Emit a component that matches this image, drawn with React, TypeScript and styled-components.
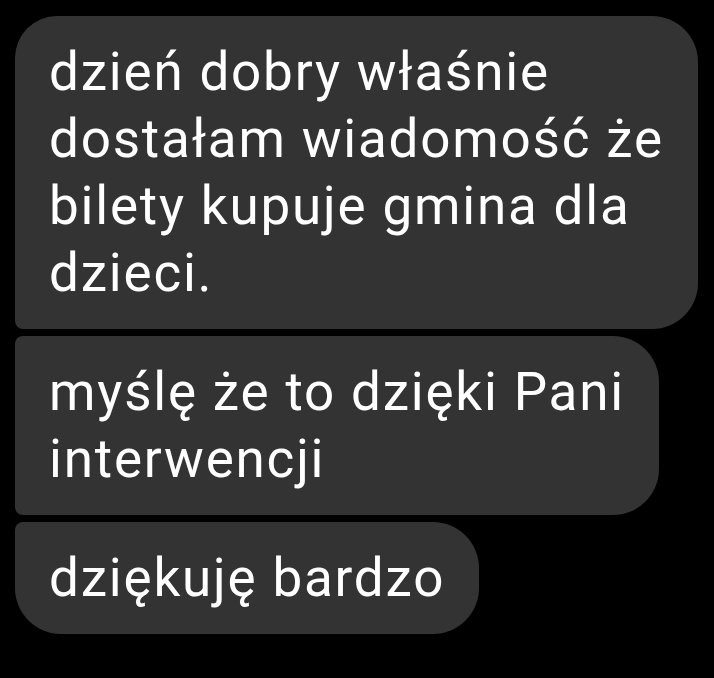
import React from "react";
import styled, { createGlobalStyle } from "styled-components";

const Global = createGlobalStyle`
  html, body { margin: 0; padding: 0; background: #000; }
  body { width: 714px; height: 678px; overflow: hidden; }
`;

const Thread = styled.div`
  display: flex;
  flex-direction: column;
  align-items: flex-start;
  gap: 7px;
  padding: 16px 0 0 15px;
  font-family: Roboto, "Noto Sans", sans-serif;
`;

type Pos = "first" | "middle" | "last";

const radii: Record<Pos, string> = {
  first: "42px 46px 46px 8px",
  middle: "8px 46px 46px 8px",
  last: "8px 46px 46px 46px",
};

const Bubble = styled.div<{ $pos: Pos }>`
  background: #333333;
  color: #ffffff;
  font-size: 53px;
  letter-spacing: 1.8px;
  line-height: 67px;
  padding: 22.5px 34px 22.5px 34px;
  border-radius: ${(p) => radii[p.$pos]};
  white-space: pre-line;
  box-sizing: border-box;
`;

const messages: { text: string; pos: Pos }[] = [
  {
    text: "dzień dobry właśnie\ndostałam wiadomość że\nbilety kupuje gmina dla\ndzieci.",
    pos: "first",
  },
  { text: "myślę że to dzięki Pani\ninterwencji", pos: "middle" },
  { text: "dziękuję bardzo", pos: "last" },
];

export default function App() {
  return (
    <>
      <Global />
      <Thread>
        {messages.map((m, i) => (
          <Bubble key={i} $pos={m.pos}>
            {m.text}
          </Bubble>
        ))}
      </Thread>
    </>
  );
}
